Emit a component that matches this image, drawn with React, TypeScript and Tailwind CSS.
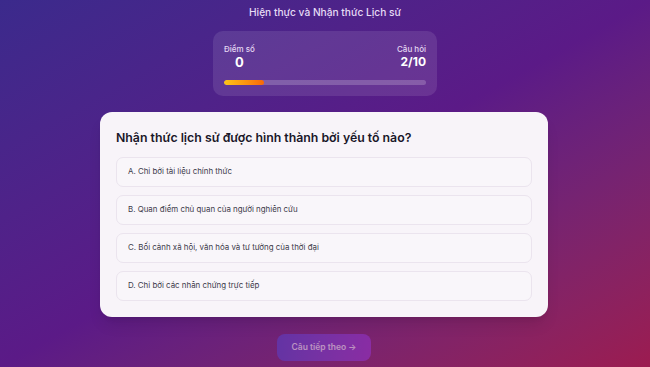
const options = [
  'A. Chỉ bởi tài liệu chính thức',
  'B. Quan điểm chủ quan của người nghiên cứu',
  'C. Bối cảnh xã hội, văn hóa và tư tưởng của thời đại',
  'D. Chỉ bởi các nhân chứng trực tiếp',
]

export default function App() {
  const progress = 20

  return (
    <div
      className="w-[650px] h-[367px] overflow-hidden flex flex-col items-center bg-gradient-to-br from-[#3b2a8c] via-[#5b1a87] to-[#9c1b50]"
      style={{ fontFamily: 'Inter, "Noto Sans", sans-serif' }}
    >
      <h1 className="mt-[5px] text-[10.2px] leading-[14px] font-medium text-[#e6dcf5]">
        Hiện thực và Nhận thức Lịch sử
      </h1>

      <div className="mt-[12px] w-[224px] h-[65px] rounded-[10px] bg-white/10 px-[11px] pt-[13px]">
        <div className="flex justify-between">
          <div className="flex flex-col items-center">
            <span className="text-[8px] leading-[10px] font-medium text-[#e4d8f2]">Điểm số</span>
            <span className="text-[13px] leading-[16px] font-bold text-white">0</span>
          </div>
          <div className="flex flex-col items-end">
            <span className="text-[8px] leading-[10px] font-medium text-[#e4d8f2]">Câu hỏi</span>
            <span className="text-[12px] leading-[16px] font-bold text-white">2/10</span>
          </div>
        </div>
        <div className="mt-[10px] h-[5px] w-full rounded-full bg-white/20 overflow-hidden">
          <div
            className="h-full rounded-full bg-gradient-to-r from-[#fcc419] to-[#f76707]"
            style={{ width: `${progress}%` }}
          />
        </div>
      </div>

      <div className="mt-[16px] w-[448px] -translate-x-[1px] rounded-[12px] bg-[#f8f4f9] p-[16px] shadow-lg">
        <h2 className="text-[12.3px] leading-[20px] font-semibold text-[#1a1729]">
          Nhận thức lịch sử được hình thành bởi yếu tố nào?
        </h2>
        <div className="mt-[9px] flex flex-col gap-[8px]">
          {options.map((opt) => (
            <div
              key={opt}
              className="h-[30px] flex items-center px-[11px] rounded-[7px] border border-[#ebe4ee] bg-[#f9f6fa] text-[7.9px] text-[#3c3a4a]"
            >
              {opt}
            </div>
          ))}
        </div>
      </div>

      <button
        disabled
        className="mt-[17px] w-[94px] h-[27px] -translate-x-[1px] rounded-[8px] bg-gradient-to-r from-[#5b3fc4] to-[#9333c9] opacity-60 text-[8.5px] font-semibold text-[#e9ddf6]"
      >
        Câu tiếp theo →
      </button>
    </div>
  )
}
